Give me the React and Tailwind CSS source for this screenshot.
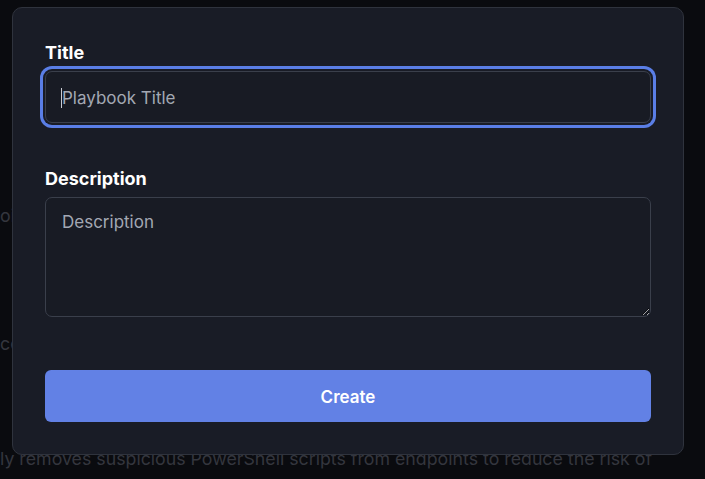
import React, { useState } from "react";

const pageLines = [
  { top: "pt-[204px]", text: "oint isolation policies are applied to every managed host in the fleet" },
  { top: "pt-[104px]", text: "ce checks run nightly against all registered collectors and agents" },
  { top: "pt-[91px]", text: "ly removes suspicious PowerShell scripts from endpoints to reduce the risk of" },
];

const CreatePlaybookModal = () => {
  const [title, setTitle] = useState("");
  const [description, setDescription] = useState("");

  return (
    <div className="absolute left-[12px] top-[7px] w-[672px] rounded-[10px] border border-[#2f333d] bg-[#191c26] px-8 pt-[33px] pb-[32px]">
      <label className="block text-[18px] leading-6 font-bold text-white">Title</label>
      <div className="relative mt-[6px]">
        <input
          value={title}
          onChange={(e) => setTitle(e.target.value)}
          placeholder="Playbook Title"
          className="block h-[52px] w-full rounded-[7px] border border-[#3a3f4b] bg-[#181b24] px-4 pt-px text-[17px] text-white placeholder:text-[#a3a8b3] outline-none ring-[3px] ring-[#5a7ee6] ring-offset-2 ring-offset-[#191c26]"
        />
        {/* text caret */}
        <span className="absolute left-[16px] top-[17px] h-[20px] w-px bg-[#c9ccd3]" />
      </div>

      <label className="mt-[44px] block text-[18px] leading-6 font-bold text-white">Description</label>
      <textarea
        value={description}
        onChange={(e) => setDescription(e.target.value)}
        placeholder="Description"
        className="mt-[6px] block h-[120px] w-full rounded-[7px] border border-[#3a3f4b] bg-[#181b24] px-4 py-[12px] text-[17px] leading-6 text-white placeholder:text-[#a3a8b3] outline-none"
      />

      <button className="mt-[53px] flex h-[52px] w-full items-center justify-center rounded-[6px] bg-[#6281e5] pt-[3px] text-[17px] font-semibold text-white">
        Create
      </button>
    </div>
  );
};

export default function App() {
  return (
    <div
      className="relative h-[479px] w-full overflow-hidden bg-[#0a0b0f]"
      style={{ fontFamily: "Inter, 'Noto Sans', sans-serif" }}
    >
      <div className="flex flex-col">
        {pageLines.map((line, i) => (
          <p key={i} className={`${line.top} whitespace-nowrap text-[17.75px] leading-6 text-[#34363e]`}>
            {line.text}
          </p>
        ))}
      </div>
      <CreatePlaybookModal />
    </div>
  );
}
